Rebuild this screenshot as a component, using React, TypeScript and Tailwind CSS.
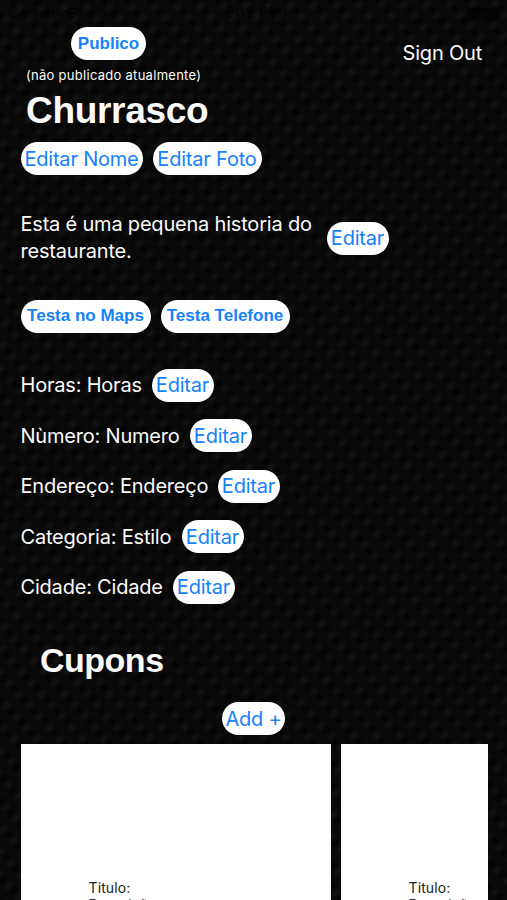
import React from "react";

const bodyText = "text-[20px] font-normal tracking-[-0.2px]";

function PillButton({
  children,
  className = "",
}: {
  children: React.ReactNode;
  className?: string;
}) {
  return (
    <button
      type="button"
      className={`flex h-[33px] shrink-0 items-center justify-center whitespace-nowrap rounded-full bg-white text-[#1482fb] ${className}`}
    >
      {children}
    </button>
  );
}

function EditButton() {
  return <PillButton className={`w-[62px] ${bodyText}`}>Editar</PillButton>;
}

function DetailRow({
  label,
  textClass,
}: {
  label: string;
  textClass: string;
}) {
  return (
    <div className="flex h-[33px] items-center">
      <span className={`shrink-0 whitespace-nowrap ${bodyText} ${textClass}`}>{label}</span>
      <EditButton />
    </div>
  );
}

function CouponCard({ className = "" }: { className?: string }) {
  return (
    <article
      className={`h-[230px] shrink-0 bg-white pl-[68px] pt-[135px] text-[14px] leading-[17px] tracking-[0.1px] text-[#222] ${className}`}
    >
      <p>Titulo:</p>
      <p>Descrição:</p>
    </article>
  );
}

function StatusBar() {
  return (
    <div className="flex h-[27px] items-center justify-between px-[8px] text-[15px] text-black/60">
      <div className="flex w-[210px] items-center gap-[7px]">
        <span>Carrier</span>
        <svg width="18" height="13" viewBox="0 0 18 13" fill="none" stroke="#000" strokeOpacity="0.6" strokeWidth="2">
          <path d="M1 5a11 11 0 0 1 16 0M4 8a7 7 0 0 1 10 0M7 11a3 3 0 0 1 4 0" />
        </svg>
      </div>
      <span className="font-semibold">2:12 PM</span>
      <div className="flex w-[210px] justify-end">
        <span className="h-[12px] w-[32px] rounded-[3px] bg-black/60" />
      </div>
    </div>
  );
}

// Dark woven texture that sits behind the whole screen
function Weave() {
  return (
    <svg className="absolute inset-0 -z-10 h-full w-full" aria-hidden="true">
      <defs>
        <radialGradient id="hole">
          <stop offset="0" stopColor="#000" stopOpacity="0.9" />
          <stop offset="1" stopColor="#000" stopOpacity="0" />
        </radialGradient>
        <radialGradient id="thread">
          <stop offset="0" stopColor="#171717" stopOpacity="0.9" />
          <stop offset="1" stopColor="#171717" stopOpacity="0" />
        </radialGradient>
        <pattern
          id="weave"
          width="17"
          height="15"
          patternUnits="userSpaceOnUse"
          patternTransform="rotate(-42)"
        >
          <rect width="17" height="15" fill="#090909" />
          <ellipse cx="8.5" cy="3.8" rx="7" ry="3.8" fill="url(#thread)" />
          <ellipse cx="8.5" cy="11.2" rx="6" ry="3.8" fill="url(#hole)" />
        </pattern>
      </defs>
      <rect width="100%" height="100%" fill="url(#weave)" />
    </svg>
  );
}

export default function App() {
  return (
    <main className="relative isolate h-[900px] w-[507px] overflow-hidden bg-[#090909] font-['Inter','Liberation_Sans',sans-serif] text-[#fafafa]">
      <Weave />
      <StatusBar />

      <header className="flex items-start justify-between pl-[26px] pr-[25px]">
        <div className="flex flex-col items-start">
          <PillButton className="ml-[45px] w-[75px] font-['Liberation_Sans',sans-serif] text-[17px] font-bold">
            Publico
          </PillButton>
          <p className="mt-[6px] whitespace-nowrap text-[13px] leading-[18px] tracking-[0.28px]">
            (não publicado atualmente)
          </p>
          <h1 className="mt-[6px] font-['Liberation_Sans',sans-serif] text-[37px] font-bold leading-[42px] tracking-[-0.3px]">
            Churrasco
          </h1>
        </div>
        <button type="button" className={`mt-[11px] leading-[30px] ${bodyText}`}>
          Sign Out
        </button>
      </header>

      <div className="mt-[10px] flex gap-[10px] pl-[20.5px]">
        <PillButton className={`w-[122px] ${bodyText}`}>Editar Nome</PillButton>
        <PillButton className={`w-[109px] ${bodyText}`}>Editar Foto</PillButton>
      </div>

      <section className="mt-[36px] flex items-center pl-[20.5px]">
        <p className={`w-[306px] whitespace-nowrap leading-[27px] ${bodyText}`}>
          Esta é uma pequena historia do
          <br />
          restaurante.
        </p>
        <EditButton />
      </section>

      <div className="mt-[34.5px] flex gap-[10px] pl-[20.5px] font-['Liberation_Sans',sans-serif] text-[17px] font-bold">
        <PillButton className="w-[130px]">Testa no Maps</PillButton>
        <PillButton className="w-[129px]">Testa Telefone</PillButton>
      </div>

      <section className="mt-[36px] flex flex-col gap-[17.5px] pl-[20.5px]">
        <DetailRow label="Horas: Horas" textClass="w-[131px]" />
        <DetailRow label="Nùmero: Numero" textClass="w-[169px]" />
        <DetailRow label="Endereço: Endereço" textClass="w-[197px]" />
        <DetailRow label="Categoria: Estilo" textClass="w-[161px]" />
        <DetailRow label="Cidade: Cidade" textClass="w-[152px]" />
      </section>

      <h2 className="mt-[35.6px] pl-[40px] font-['Liberation_Sans',sans-serif] text-[34px] font-bold leading-[42px] tracking-[-0.5px]">
        Cupons
      </h2>
      <div className="mt-[21px] flex justify-center">
        <PillButton className={`w-[63px] ${bodyText}`}>Add +</PillButton>
      </div>

      <section className="ml-[20.5px] mt-[9px] flex w-[467px] gap-[10px] overflow-hidden">
        <CouponCard className="w-[310px]" />
        <CouponCard className="w-[310px]" />
      </section>
    </main>
  );
}
